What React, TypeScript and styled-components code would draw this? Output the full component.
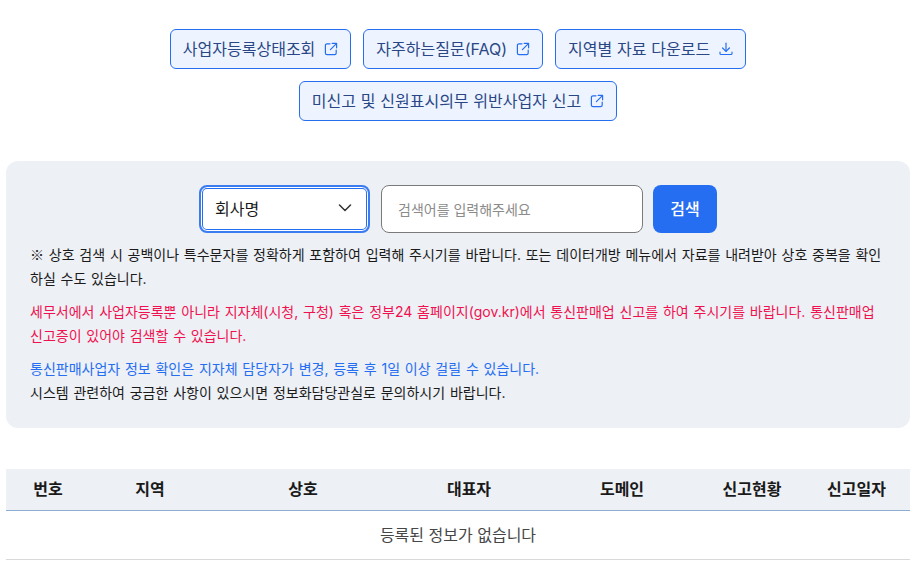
import React from "react";
import styled, { createGlobalStyle } from "styled-components";

const Global = createGlobalStyle`
  html, body { margin: 0; padding: 0; background: #fff; }
  body { font-family: Inter, "Noto Sans CJK KR", sans-serif; color: #1a1a1a; overflow: hidden; }
  * { box-sizing: border-box; }
`;

const Page = styled.div`
  width: 911px;
  height: 563px;
  padding: 29px 1px 0 6px;
  overflow: hidden;
`;

const LinkRow = styled.div`
  display: flex;
  flex-wrap: wrap;
  justify-content: center;
  gap: 12px;
  width: 904px;
  padding: 0 140px;
`;

const LinkButton = styled.a`
  display: inline-flex;
  align-items: center;
  gap: 9px;
  height: 40px;
  padding: 0 12px 1px;
  border: 1px solid #256ef1;
  border-radius: 6px;
  background: #eef4ff;
  color: #2a4785;
  font-size: 16px;
  line-height: 20px;
  word-spacing: 0.3px;
  white-space: nowrap;
  svg { color: #256ef1; flex: none; margin-top: 1px; }
`;

const Panel = styled.section`
  margin-top: 40px;
  height: 267px;
  padding: 24px 24px 0;
  background: #edf0f5;
  border-radius: 12px;
`;

const SearchRow = styled.div`
  display: flex;
  justify-content: center;
  align-items: flex-start;
  height: 48px;
`;

const Select = styled.div`
  display: flex;
  align-items: center;
  justify-content: space-between;
  width: 171px;
  height: 48px;
  padding: 0 16px 3px 14px;
  margin-right: 11px;
  background: #fff;
  border: 2px solid #3b7cf0;
  border-radius: 8px;
  box-shadow: inset 0 0 0 1px #fff, inset 0 0 0 2px #256ef1;
  font-size: 16px;
  color: #1a1a1a;
  svg { color: #333; }
`;

const Input = styled.div`
  display: flex;
  align-items: center;
  width: 262px;
  height: 48px;
  padding: 0 16px;
  margin-right: 10px;
  background: #fff;
  border: 1px solid #7a7a7a;
  border-radius: 8px;
  font-size: 14px;
  color: #8b8b8b;
`;

const SearchButton = styled.button`
  width: 64px;
  height: 48px;
  padding: 0 0 2px;
  border: 0;
  border-radius: 8px;
  background: #256ef1;
  color: #fff;
  font-family: inherit;
  font-size: 16px;
  font-weight: 500;
`;

const Note = styled.p<{ $tone?: string; $top?: number }>`
  margin: ${(p) => p.$top ?? 0}px 0 0;
  padding-right: 3px;
  font-size: 14px;
  line-height: 24px;
  word-spacing: 0.85px;
  color: ${(p) => p.$tone ?? "#1a1a1a"};
`;

const Mark = styled.span`
  font-family: "Noto Sans CJK KR", sans-serif;
`;

const TableHead = styled.div`
  display: grid;
  grid-template-columns: 84px 120px 186px 146px 160px 100px 109px;
  margin-top: 41px;
  height: 42px;
  align-items: center;
  background: #edf0f5;
  border-bottom: 1px solid #8eadd3;
  font-size: 16px;
  font-weight: 700;
  color: #1a1a1a;
  text-align: center;
  padding-bottom: 4px;
`;

const EmptyRow = styled.div`
  display: flex;
  align-items: center;
  justify-content: center;
  height: 49px;
  border-bottom: 1px solid #d9d9d9;
  font-size: 16px;
  padding-bottom: 2px;
  color: #464646;
`;

const ExternalIcon = () => (
  <svg width="14" height="14" viewBox="0 0 14 14" fill="none" stroke="currentColor" strokeWidth="1.2" strokeLinecap="round" strokeLinejoin="round">
    <path d="M6 1.8H3a1.6 1.6 0 0 0-1.6 1.6v7.6A1.6 1.6 0 0 0 3 12.6h7.6a1.6 1.6 0 0 0 1.6-1.6V8" />
    <path d="M8.2 1.4h4.4v4.4" />
    <path d="M12.4 1.6 6.4 7.6" />
  </svg>
);

const DownloadIcon = () => (
  <svg width="14" height="14" viewBox="0 0 14 14" fill="none" stroke="currentColor" strokeWidth="1.2" strokeLinecap="round" strokeLinejoin="round">
    <path d="M7 1.2v8" />
    <path d="M3.6 6 7 9.4 10.4 6" />
    <path d="M1 10.2v1.2c0 .6.5 1.1 1.1 1.1h9.8c.6 0 1.1-.5 1.1-1.1v-1.2" />
  </svg>
);

const Chevron = () => (
  <svg width="14" height="8" viewBox="0 0 14 8" fill="none" stroke="currentColor" strokeWidth="1.5" strokeLinecap="round" strokeLinejoin="round">
    <path d="M1.5 1 7 6.5 12.5 1" />
  </svg>
);

const links = [
  { label: "사업자등록상태조회", icon: <ExternalIcon /> },
  { label: "자주하는질문(FAQ)", icon: <ExternalIcon /> },
  { label: "지역별 자료 다운로드", icon: <DownloadIcon /> },
  { label: "미신고 및 신원표시의무 위반사업자 신고", icon: <ExternalIcon /> },
];

const heads = ["번호", "지역", "상호", "대표자", "도메인", "신고현황", "신고일자"];

export default function App() {
  return (
    <Page>
      <Global />
      <LinkRow>
        {links.map((l) => (
          <LinkButton key={l.label}>
            {l.label}
            {l.icon}
          </LinkButton>
        ))}
      </LinkRow>
      <Panel>
        <SearchRow>
          <Select>
            회사명
            <Chevron />
          </Select>
          <Input>검색어를 입력해주세요</Input>
          <SearchButton>검색</SearchButton>
        </SearchRow>
        <Note $top={9}>
          <Mark>※</Mark> 상호 검색 시 공백이나 특수문자를 정확하게 포함하여 입력해 주시기를 바랍니다. 또는 데이터개방 메뉴에서 자료를 내려받아 상호 중복을 확인하실 수도 있습니다.
        </Note>
        <Note $tone="#f0104f" $top={9}>
          세무서에서 사업자등록뿐 아니라 지자체(시청, 구청) 혹은 정부24 홈페이지(gov.kr)에서 통신판매업 신고를 하여 주시기를 바랍니다. 통신판매업 신고증이 있어야 검색할 수 있습니다.
        </Note>
        <Note $tone="#256ef1" $top={9}>
          통신판매사업자 정보 확인은 지자체 담당자가 변경, 등록 후 1일 이상 걸릴 수 있습니다.
        </Note>
        <Note>시스템 관련하여 궁금한 사항이 있으시면 정보화담당관실로 문의하시기 바랍니다.</Note>
      </Panel>
      <TableHead>
        {heads.map((h) => (
          <div key={h}>{h}</div>
        ))}
      </TableHead>
      <EmptyRow>등록된 정보가 없습니다</EmptyRow>
    </Page>
  );
}
